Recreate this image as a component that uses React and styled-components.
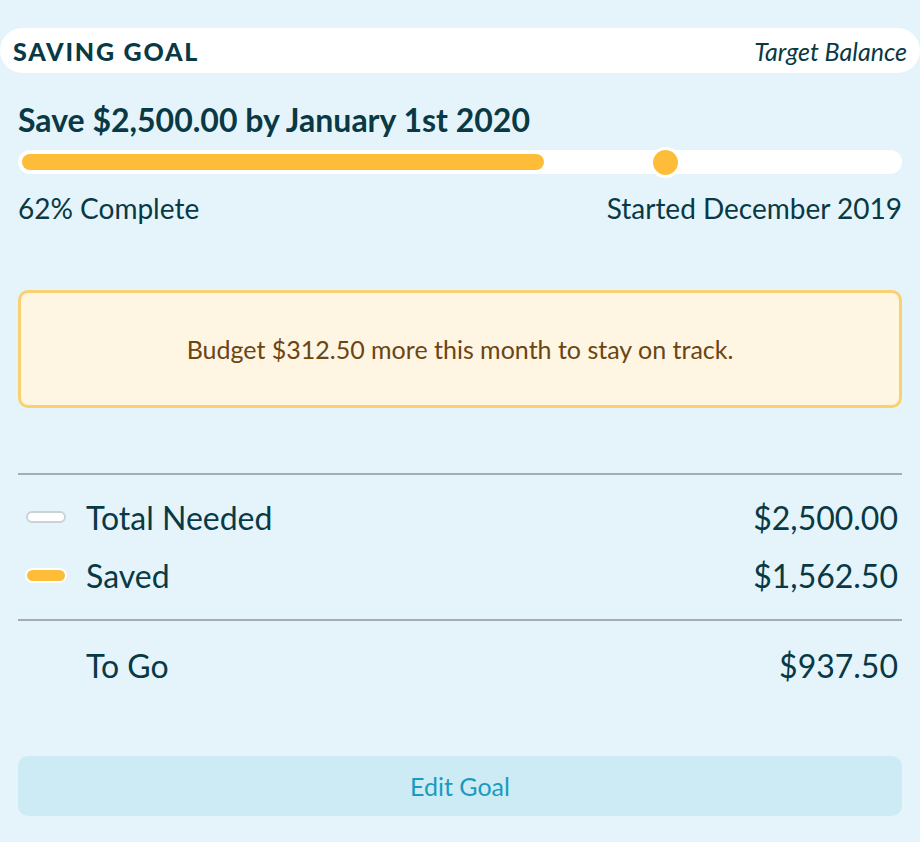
import React from "react";
import styled, { createGlobalStyle } from "styled-components";

const Global = createGlobalStyle`
  html, body { margin: 0; padding: 0; background: #e4f4fa; }
  body { font-family: Lato, "Open Sans", sans-serif; color: #0a3a47; }
  * { box-sizing: border-box; }
`;

const Page = styled.div`
  width: 920px;
  height: 842px;
  padding-top: 28px;
  background: #e4f4fa;
`;

const Header = styled.div`
  height: 45px;
  background: #ffffff;
  border-radius: 23px;
  display: flex;
  align-items: center;
  justify-content: space-between;
  padding: 0 13px 0 13px;
`;

const HeaderTitle = styled.h2`
  margin: 0;
  font-family: Lato, sans-serif;
  font-weight: 900;
  font-size: 25px;
  letter-spacing: 1.8px;
  color: #093945;
`;

const HeaderMeta = styled.span`
  font-style: italic;
  font-size: 25px;
  color: #093945;
`;

const Body = styled.div`
  padding: 0 18px;
`;

const Title = styled.h1`
  margin: 28px 0 0;
  font-size: 32px;
  line-height: 38px;
  font-weight: 700;
  color: #093945;
`;

const Track = styled.div`
  position: relative;
  margin-top: 11px;
  height: 24px;
  border-radius: 12px;
  background: #ffffff;
  padding: 4px;
  display: flex;
`;

const Fill = styled.div`
  height: 16px;
  border-radius: 8px;
  background: #fdbd39;
`;

const Marker = styled.span`
  position: absolute;
  top: 50%;
  width: 31px;
  height: 31px;
  margin-left: -15.5px;
  margin-top: -15.5px;
  border-radius: 50%;
  background: #fdbd39;
  border: 3.5px solid #ffffff;
`;

const Labels = styled.div`
  display: flex;
  justify-content: space-between;
  margin-top: 18px;
  font-size: 28px;
  line-height: 32px;
  color: #093945;
`;

const Alert = styled.div`
  margin-top: 66px;
  height: 118px;
  border: 3px solid #fbd06f;
  background: #fef5e2;
  border-radius: 10px;
  display: flex;
  align-items: center;
  justify-content: center;
  font-size: 25px;
  color: #6b4514;
`;

const Divider = styled.hr`
  margin: 0;
  border: none;
  height: 2px;
  background: #a6adb0;
`;

const Summary = styled.div`
  margin-top: 65px;
`;

const RowGroup = styled.div`
  padding: ${(p) => p.$pad};
`;

const Row = styled.div`
  display: grid;
  grid-template-columns: 68px 1fr auto;
  align-items: center;
  height: 58px;
  padding-right: 4px;
  font-size: 32px;
  color: #093945;
`;

const Swatch = styled.span`
  display: block;
  margin-left: ${(p) => (p.$filled ? "7px" : "8px")};
  width: ${(p) => (p.$filled ? "42px" : "40px")};
  height: ${(p) => (p.$filled ? "15px" : "12px")};
  border-radius: 8px;
  background: ${(p) => (p.$filled ? "#fdbd39" : "#ffffff")};
  border: ${(p) => (p.$filled ? "2px solid #ffffff" : "2px solid #cbd2d5")};
`;

const Empty = styled.span``;

const Value = styled.span`
  text-align: right;
`;

const Button = styled.button`
  display: block;
  width: 100%;
  margin-top: 62px;
  height: 60px;
  border: none;
  border-radius: 10px;
  background: #cdebf4;
  color: #1a9bbd;
  font-family: Lato, sans-serif;
  font-size: 25px;
  cursor: pointer;
`;

export default function App() {
  const fill = 59.6;
  const expected = 73.2;
  return (
    <Page>
      <Global />
      <Header>
        <HeaderTitle>SAVING GOAL</HeaderTitle>
        <HeaderMeta>Target Balance</HeaderMeta>
      </Header>
      <Body>
        <Title>Save $2,500.00 by January 1st 2020</Title>
        <Track>
          <Fill style={{ width: `${fill}%` }} />
          <Marker style={{ left: `${expected}%` }} />
        </Track>
        <Labels>
          <span>62% Complete</span>
          <span>Started December 2019</span>
        </Labels>
        <Alert>Budget $312.50 more this month to stay on track.</Alert>
        <Summary>
          <Divider />
          <RowGroup $pad="13px 0 15px">
            <Row>
              <Swatch />
              <span>Total Needed</span>
              <Value>$2,500.00</Value>
            </Row>
            <Row>
              <Swatch $filled />
              <span>Saved</span>
              <Value>$1,562.50</Value>
            </Row>
          </RowGroup>
          <Divider />
          <RowGroup $pad="15px 0 0">
            <Row>
              <Empty />
              <span>To Go</span>
              <Value>$937.50</Value>
            </Row>
          </RowGroup>
        </Summary>
        <Button>Edit Goal</Button>
      </Body>
    </Page>
  );
}
